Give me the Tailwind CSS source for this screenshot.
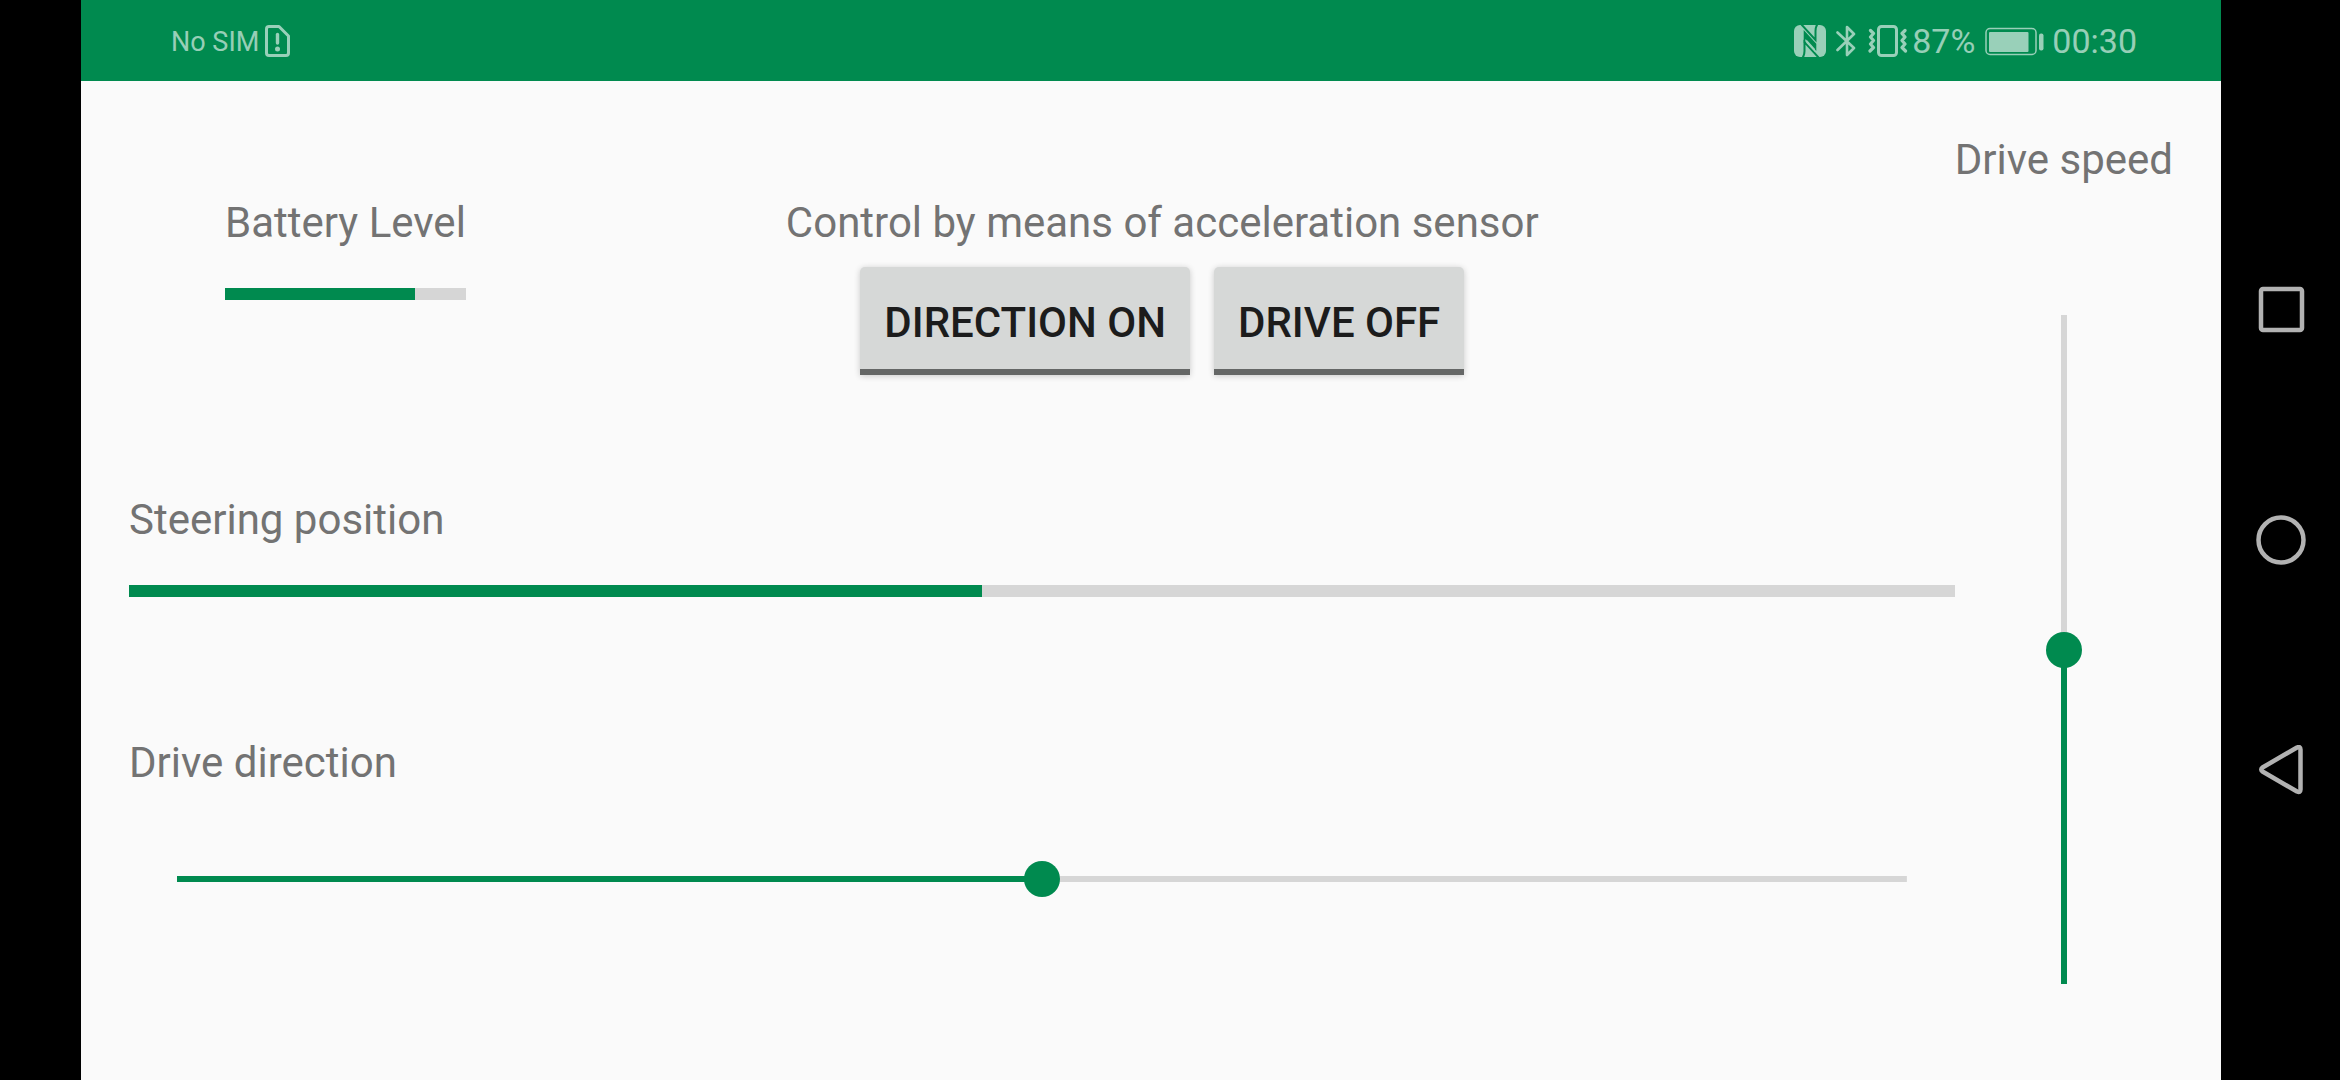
<!DOCTYPE html>
<html lang="en">
<head>
<meta charset="utf-8">
<meta name="viewport" content="width=device-width, initial-scale=1">
<title>Drive control</title>
<script src="https://cdn.jsdelivr.net/npm/@tailwindcss/browser@4"></script>
</head>
<body class="flex min-h-screen bg-black pl-[81px] font-[Roboto,sans-serif]">
  <div class="flex min-w-0 flex-1 flex-col bg-[#fafafa]">
    <header class="flex h-[81px] items-center justify-between bg-[#008a4f] pr-[84px] pl-[90px] text-white/60">
      <div class="flex items-center gap-1">
        <span class="pt-0.5 text-[27px] leading-8">No SIM</span>
        <svg class="h-8 w-7" viewBox="0 0 28 32" fill="none" stroke="#99d0b9" stroke-width="3" stroke-linejoin="round" aria-label="SIM missing">
          <path d="M5.500 1.500H16L25.500 11V28Q25.500 30.500 23 30.500H6Q3.500 30.500 3.500 28V4Q3.500 1.500 6 1.500Z"/>
          <path d="M14.500 9.500V18" stroke-width="3.400" stroke-linecap="round"/>
          <circle cx="14.500" cy="24" r="2.500" fill="#99d0b9" stroke="none"/>
        </svg>
      </div>
      <div class="flex items-center">
        <svg class="mr-2.5 size-8" viewBox="0 0 32 32" fill="none" stroke="#008a4f" stroke-width="2" aria-label="NFC">
          <rect width="32" height="32" rx="6" fill="#99d0b9" stroke="none"/>
          <path d="M7 -1L21.500 15V6Q21.500 2 23.500 -1"/>
          <path d="M25 33L10.500 17V26Q10.500 30 8.500 33"/>
          <path d="M10.500 18V7L21.500 19V24L10.500 12" stroke-width="1.600" fill="#008a4f"/>
          <path d="M12.500 14.500L21 24V27L12.500 18Z" fill="#99d0b9" stroke="none"/>
        </svg>
        <svg class="mr-3 h-8 w-5" viewBox="0 0 20 32" fill="none" stroke="#99d0b9" stroke-width="2.600" stroke-linejoin="round" stroke-linecap="round" aria-label="Bluetooth">
          <path d="M1.500 7.500L18 23L11 30V2L18 9L1.500 25"/>
        </svg>
        <svg class="mr-1 h-8 w-10" viewBox="0 0 40 32" fill="none" stroke="#99d0b9" stroke-width="3" stroke-linejoin="round" aria-label="Vibrate">
          <rect x="10.500" y="1.500" width="18" height="29" rx="3"/>
          <path d="M2.500 5.500L5.500 8.500L2.500 12L5.500 15.500L2.500 19L5.500 22.500L2 26M37 5.500L34 8.500L37 12L34 15.500L37 19L34 22.500L37.500 26" stroke-width="3.200" stroke-linecap="round"/>
        </svg>
        <span class="mr-2.5 text-[34px] leading-10">87%</span>
        <svg class="mr-2 h-8 w-[59px]" viewBox="0 0 59 32" fill="#99d0b9" aria-label="Battery">
          <rect x="1" y="3.500" width="50" height="26" rx="4" fill="none" stroke="#99d0b9" stroke-width="1.500"/>
          <rect x="4" y="7" width="39.500" height="20" rx="1"/>
          <rect x="54" y="8.500" width="4.500" height="17" rx="2"/>
        </svg>
        <span class="text-[34px] leading-10">00:30</span>
      </div>
    </header>

    <main class="flex flex-1 px-12 pb-24 text-[42px] leading-12 text-[#737373]">
      <div class="flex min-w-0 flex-1 flex-col pt-[118px]">
        <div class="flex items-start px-24">
          <div class="flex flex-col gap-[41px]">
            <label for="battery">Battery Level</label>
            <progress id="battery" value="79" max="100" class="block h-3 w-full appearance-none [&::-webkit-progress-bar]:bg-[#d6d6d6] [&::-webkit-progress-value]:bg-[#008a4f]"></progress>
          </div>
          <section class="flex flex-1 flex-col items-center gap-5">
            <h2>Control by means of acceleration sensor</h2>
            <div class="flex gap-6">
              <button type="button" class="rounded-t-[5px] border-b-6 border-[#656766] bg-[#d6d8d7] px-6 pt-8 pb-[22px] font-medium text-[#1c1c1c] shadow-[0_1px_6px_rgba(0,0,0,0.2)]">DIRECTION ON</button>
              <button type="button" class="rounded-t-[5px] border-b-6 border-[#656766] bg-[#d6d8d7] px-6 pt-8 pb-[22px] font-medium text-[#1c1c1c] shadow-[0_1px_6px_rgba(0,0,0,0.2)]">DRIVE OFF</button>
            </div>
          </section>
        </div>

        <div class="mt-[121px] flex flex-col gap-[41px]">
          <label for="steering">Steering position</label>
          <progress id="steering" value="46.7" max="100" class="block h-3 w-full appearance-none [&::-webkit-progress-bar]:bg-[#d6d6d6] [&::-webkit-progress-value]:bg-[#008a4f]"></progress>
        </div>

        <div class="mt-[142px] flex flex-col gap-[74px]">
          <label for="direction">Drive direction</label>
          <div class="flex px-12">
            <input id="direction" type="range" min="0" max="100" value="50" class="h-9 w-full appearance-none bg-[linear-gradient(to_right,#008a4f_50%,#d6d6d6_50%)] bg-[length:100%_6px] bg-center bg-no-repeat [&::-webkit-slider-thumb]:size-9 [&::-webkit-slider-thumb]:appearance-none [&::-webkit-slider-thumb]:rounded-full [&::-webkit-slider-thumb]:bg-[#008a4f]">
          </div>
        </div>
      </div>

      <div class="flex flex-col items-center gap-[131px] pt-[55px]">
        <label for="speed">Drive speed</label>
        <input id="speed" type="range" min="0" max="100" value="50" class="min-h-0 w-9 flex-1 appearance-none bg-[linear-gradient(to_top,#008a4f_50%,#d6d6d6_50%)] bg-[length:6px_100%] bg-center bg-no-repeat [direction:rtl] [writing-mode:vertical-lr] [&::-webkit-slider-thumb]:size-9 [&::-webkit-slider-thumb]:appearance-none [&::-webkit-slider-thumb]:rounded-full [&::-webkit-slider-thumb]:bg-[#008a4f]">
      </div>
    </main>
  </div>

  <nav class="flex w-[119px] flex-col items-center justify-center gap-[180px]">
    <button type="button" aria-label="Recent apps">
      <svg class="block size-[50px]" viewBox="0 0 50 50" fill="none" stroke="#b2b2b2" stroke-width="4.500"><rect x="5" y="4" width="41" height="41" rx="2"/></svg>
    </button>
    <button type="button" aria-label="Home">
      <svg class="block size-[50px]" viewBox="0 0 50 50" fill="none" stroke="#b2b2b2" stroke-width="4.500"><circle cx="25" cy="25" r="22.500"/></svg>
    </button>
    <button type="button" aria-label="Back">
      <svg class="block size-[50px]" viewBox="0 0 50 50" fill="none" stroke="#b2b2b2" stroke-width="4.500" stroke-linejoin="round"><path d="M41 2.500Q44.500 1 44.500 4.500V44.500Q44.500 48 41 46.500L6.500 26.500Q4 24.500 6.500 22.500Z"/></svg>
    </button>
  </nav>
</body>
</html>
